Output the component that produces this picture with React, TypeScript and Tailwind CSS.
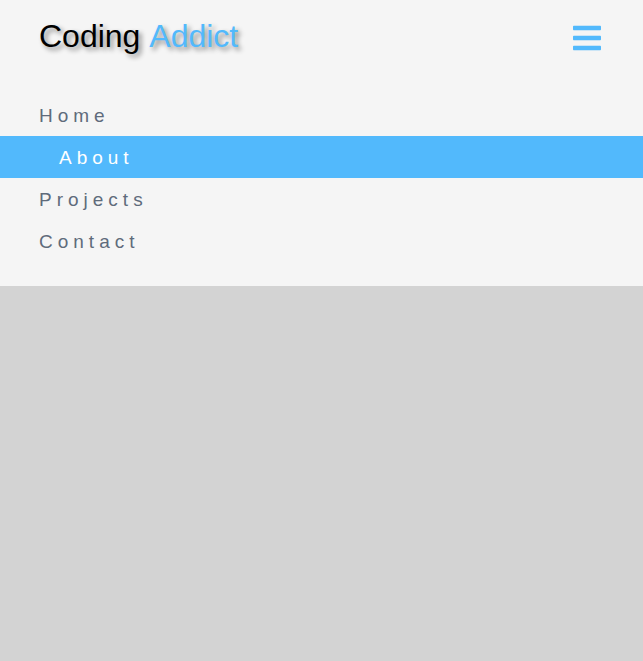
import React from "react";
import { FaBars } from "react-icons/fa";

const links = ["Home", "About", "Projects", "Contact"];

export default function App() {
  return (
    <div className="min-h-screen bg-[#d3d3d3] font-['Liberation_Sans',Arial,sans-serif]">
      <nav className="bg-[#f5f5f5] pb-6">
        <header className="flex items-center justify-between pt-4 pr-10 pl-[39px]">
          <h1 className="text-[32px] leading-10 text-black [font-kerning:none] [text-shadow:3px_3px_5px_rgba(0,0,0,0.45)]">
            Coding <span className="text-[#52b9fc]">Addict</span>
          </h1>
          <button type="button" aria-label="Toggle menu" className="pt-1 text-[32px] text-[#52b9fc]">
            <FaBars />
          </button>
        </header>
        <ul className="pt-[38px]">
          {links.map((label) => (
            <li key={label}>
              <a
                href={`#${label.toLowerCase()}`}
                className={`block pt-[9px] pb-[7px] text-[19px] leading-[26px] tracking-[5px] ${
                  label === "About" ? "bg-[#52b9fc] pl-[59px] text-white" : "pl-[39px] text-[#5f6b7b]"
                }`}
              >
                {label}
              </a>
            </li>
          ))}
        </ul>
      </nav>
    </div>
  );
}
